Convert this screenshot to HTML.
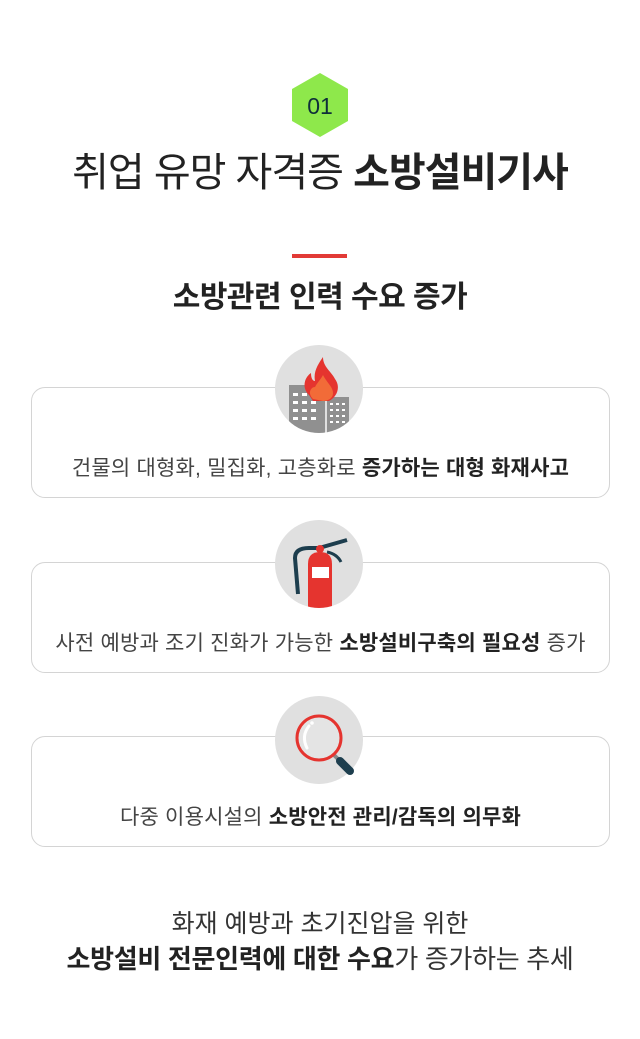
<!DOCTYPE html><html><head><meta charset="utf-8"><style>
body{margin:0;width:640px;height:1039px;background:#fff;position:relative;font-family:"Liberation Sans","Noto Sans CJK KR",sans-serif;color:#222;overflow:hidden}
.a{position:absolute}
.t{left:0;width:640px;text-align:center}
.card{position:absolute;left:31px;width:577px;height:109px;border:1px solid #d4d4d4;border-radius:14px;background:#fff}
.card p{position:absolute;left:0;right:0;bottom:15px;margin:0;text-align:center;font-size:21px;color:#444;letter-spacing:0.2px}
.card b{color:#222}
.ic{position:absolute;left:275px;width:88px;height:88px}
</style></head><body>
<svg class="a" style="left:291px;top:72px" width="58" height="66"><polygon points="29,1 57,17 57,49 29,65 1,49 1,17" fill="#8ee84b"/><text x="29" y="42" text-anchor="middle" font-size="23" fill="#0f2f3a" font-family="Liberation Sans">01</text></svg>
<div class="a t" style="top:140px;font-size:40px;letter-spacing:-1px">취업 유망 자격증 <b>소방설비기사</b></div>
<div class="a" style="left:292px;top:254px;width:55px;height:4px;background:#e23a36"></div>
<div class="a t" style="top:272px;font-size:30px;font-weight:bold;letter-spacing:-0.5px">소방관련 인력 수요 증가</div>

<div class="card" style="top:387px"><p>건물의 대형화, 밀집화, 고층화로 <b>증가하는 대형 화재사고</b></p></div>
<div class="card" style="top:562px"><p>사전 예방과 조기 진화가 가능한 <b>소방설비구축의 필요성</b> 증가</p></div>
<div class="card" style="top:736px"><p>다중 이용시설의 <b>소방안전 관리/감독의 의무화</b></p></div>

<svg class="ic" style="top:345px" viewBox="0 0 88 88"><defs><clipPath id="c1"><circle cx="44" cy="44" r="44"/></clipPath></defs><circle cx="44" cy="44" r="44" fill="#e0e0e0"/><g clip-path="url(#c1)">
<rect x="14" y="40" width="36" height="50" fill="#909090"/><rect x="52" y="52" width="22" height="40" fill="#909090"/>
<g fill="#fff"><rect x="18" y="48" width="5" height="3"/><rect x="27" y="48" width="5" height="3"/><rect x="36" y="48" width="5" height="3"/><rect x="18" y="56" width="5" height="3"/><rect x="27" y="56" width="5" height="3"/><rect x="36" y="56" width="5" height="3"/><rect x="18" y="64" width="5" height="3"/><rect x="27" y="64" width="5" height="3"/><rect x="36" y="64" width="5" height="3"/><rect x="18" y="72" width="5" height="3"/><rect x="27" y="72" width="5" height="3"/><rect x="36" y="72" width="5" height="3"/>
<rect x="55" y="58" width="3" height="2"/><rect x="61" y="58" width="3" height="2"/><rect x="67" y="58" width="3" height="2"/><rect x="55" y="64" width="3" height="2"/><rect x="61" y="64" width="3" height="2"/><rect x="67" y="64" width="3" height="2"/><rect x="55" y="70" width="3" height="2"/><rect x="61" y="70" width="3" height="2"/><rect x="67" y="70" width="3" height="2"/><rect x="55" y="76" width="3" height="2"/><rect x="61" y="76" width="3" height="2"/><rect x="67" y="76" width="3" height="2"/></g>
<path d="M34 50 C26 42 30 32 36 28 C36 34 38 36 40 36 C38 26 44 18 48 12 C48 22 56 26 60 34 C66 42 62 52 54 56 L38 56 Z" fill="#e5342f"/>
<path d="M38 54 C32 48 36 42 40 42 C42 38 46 34 48 30 C52 38 58 42 58 48 C58 54 52 56 48 56 Z" fill="#f26b38"/></g></svg>

<svg class="ic" style="top:520px" viewBox="0 0 88 88"><defs><clipPath id="c2"><circle cx="44" cy="44" r="44"/></clipPath></defs><circle cx="44" cy="44" r="44" fill="#e0e0e0"/><g clip-path="url(#c2)">
<path d="M23 74 L20 38 Q20 28 34 28 L44 28 L72 20" stroke="#1d3e4e" stroke-width="4" fill="none"/>
<path d="M52 32 Q62 34 66 42" stroke="#1d3e4e" stroke-width="3" fill="none"/>
<circle cx="45" cy="29" r="4" fill="#e5342f"/>
<path d="M33 88 L33 44 Q33 32 45 32 Q57 32 57 44 L57 88 Z" fill="#e5342f"/>
<rect x="37" y="47" width="17" height="11" fill="#fff"/></g></svg>

<svg class="ic" style="top:696px" viewBox="0 0 88 88"><circle cx="44" cy="44" r="44" fill="#e0e0e0"/>
<line x1="58" y1="58" x2="68" y2="68" stroke="#888" stroke-width="4"/>
<line x1="65" y1="65" x2="75" y2="75" stroke="#1d3e4e" stroke-width="8" stroke-linecap="round"/>
<circle cx="44" cy="42" r="22" fill="#e4e4e4" stroke="#e5342f" stroke-width="3"/>
<path d="M32 52 Q26 40 34 30" stroke="#fff" stroke-width="3" fill="none" stroke-linecap="round"/><circle cx="37" cy="27" r="1.8" fill="#fff"/></svg>

<div class="a t" style="top:904px;font-size:25px;color:#333">화재 예방과 초기진압을 위한</div>
<div class="a t" style="top:939px;font-size:26px;color:#333;letter-spacing:-0.3px"><b style="color:#222">소방설비 전문인력에 대한 수요</b>가 증가하는 추세</div>
</body></html>
